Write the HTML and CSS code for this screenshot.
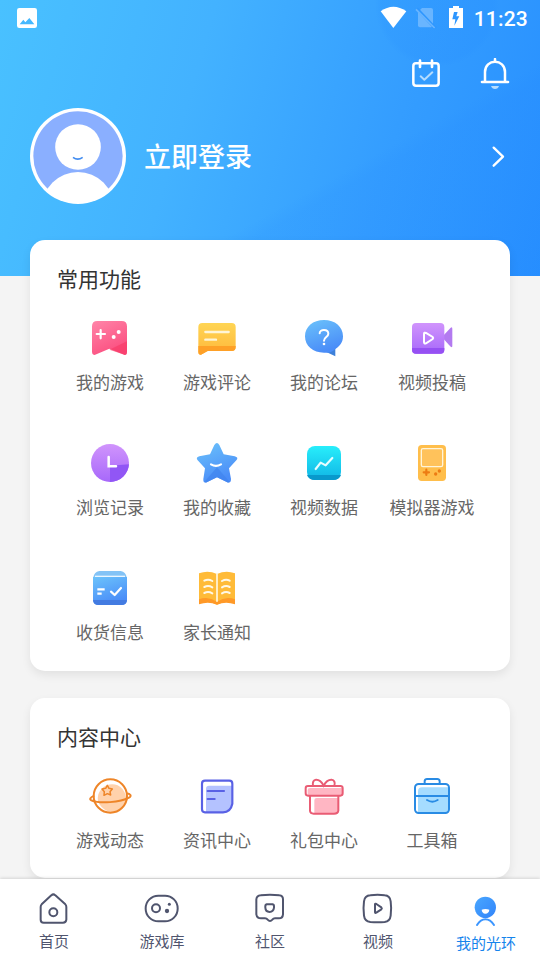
FILE: index.html
```html
<!DOCTYPE html>
<html lang="zh-CN">
<head>
<meta charset="utf-8">
<title>我的光环</title>
<link rel="stylesheet" href="styles.css">
</head>
<body>
<svg class="defs" width="0" height="0" aria-hidden="true">
  <defs>
    <linearGradient id="pink" x1="0" y1="0" x2="0.5" y2="1"><stop offset="0" stop-color="#ff85a9"/><stop offset="1" stop-color="#fb4f80"/></linearGradient>
    <linearGradient id="gold" x1="0" y1="0" x2="0" y2="1"><stop offset="0" stop-color="#ffd554"/><stop offset="1" stop-color="#ffb83b"/></linearGradient>
    <linearGradient id="blue" x1="0" y1="0" x2="0.4" y2="1"><stop offset="0" stop-color="#6cc3fb"/><stop offset="1" stop-color="#4a8df8"/></linearGradient>
    <linearGradient id="violet" x1="0" y1="0" x2="0" y2="1"><stop offset="0" stop-color="#d094fc"/><stop offset="1" stop-color="#a768fa"/></linearGradient>
    <linearGradient id="cyan" x1="0" y1="0" x2="0" y2="1"><stop offset="0" stop-color="#28eefb"/><stop offset="1" stop-color="#10b5e5"/></linearGradient>
    <linearGradient id="me" x1="0" y1="0" x2="1" y2="1"><stop offset="0" stop-color="#49a7ff"/><stop offset="1" stop-color="#3284fa"/></linearGradient>
  </defs>
</svg>
<div class="app">
  <header class="hero">
    <div class="status">
      <svg class="status-picture" viewBox="51 24 60 60"><rect x="51" y="24" width="60" height="60" rx="7" fill="#fff"/><path d="M59 73L70 59L76 67L88 54L103 73Z" fill="#45b8fe"/></svg>
      <svg class="status-icons" viewBox="330 15 255 72">
        <path d="M332 34Q370 7 409 34L370 84Z" fill="#fff"/>
        <path d="M456 24H483Q489 24 489 30V76Q489 82 483 82H450Q444 82 444 76V36Z" fill="#69b5ff"/>
        <path d="M441 26L496 85" stroke="#2d96ff" stroke-width="9"/><path d="M438 28L494 84" stroke="#69b5ff" stroke-width="5"/>
        <path d="M549 18H567V24H579V84H537V24H549Z" fill="#fff"/><path d="M552 36H563L559 49H568L553 77L556 58H547Z" fill="#2d96ff"/>
      </svg>
      <span class="clock">11:23</span>
    </div>
    <div class="actions">
      <svg viewBox="420 174 96 96" fill="none" stroke="#fff" stroke-linecap="round">
        <rect x="430" y="190" width="76" height="67" rx="8" stroke-width="7.5"/><path d="M450 182V201M486 182V201" stroke-width="8"/><path d="M452 229L463 239L487 217" stroke-width="6" stroke="#b4dcff" stroke-linejoin="round"/>
      </svg>
      <svg viewBox="627 174 96 96" fill="none" stroke="#fff" stroke-linecap="round">
        <path d="M645 245V216C645 175 705 175 705 216V245M675 177V184" stroke-width="7.5"/><path d="M636 246H714" stroke-width="8"/><path d="M663 258H687Q684 267 675 267Q666 267 663 258Z" fill="#b4dcff" stroke="none"/>
      </svg>
    </div>
    <div class="profile">
      <svg class="avatar" viewBox="90 324 288 288">
        <clipPath id="face"><circle cx="234" cy="468" r="140"/></clipPath>
        <circle cx="234" cy="468" r="144" fill="#fff"/><circle cx="234" cy="468" r="134" fill="#8aafff"/>
        <g clip-path="url(#face)" fill="#fff"><circle cx="234" cy="441" r="68.5"/><circle cx="234" cy="624" r="108"/></g>
        <path d="M219 472Q233 483 248 472" fill="none" stroke="#438df0" stroke-width="5"/>
      </svg>
      <span class="login">立即登录</span>
      <svg class="chevron" viewBox="663 438 48 66"><path d="M671 443L699 470L671 497" fill="none" stroke="#fff" stroke-width="7" stroke-linecap="round" stroke-linejoin="round"/></svg>
    </div>
  </header>

  <main class="content">
    <section class="card card-common">
      <h2>常用功能</h2>
      <div class="grid">
        <div class="item">
          <svg viewBox="54 18 132 132"><path d="M82 33H155Q171 33 171 49V124Q171 139 159 133L118 116L79 133Q66 139 66 124V49Q66 33 82 33Z" fill="url(#pink)"/><path d="M118 119L171 94V126Q171 139 159 133Z" fill="#f83b67" opacity=".65"/><path d="M92 60V85M80 72H105" stroke="#fff" stroke-width="6.5" stroke-linecap="round"/><circle cx="131" cy="81" r="6" fill="#fff"/><circle cx="146" cy="66" r="6" fill="#fff"/></svg>
          <span>我的游戏</span>
        </div>
        <div class="item">
          <svg viewBox="375 18 132 132"><path d="M397 39H485Q497 39 497 51V111Q497 123 485 123H413L393 134Q385 136 385 126V51Q385 39 397 39Z" fill="url(#gold)"/><path d="M385 108H497V111Q497 123 485 123H413L393 134Q385 136 385 126Z" fill="#fea027"/><path d="M406 66H476M406 89H438" stroke="#fff5d6" stroke-width="7" stroke-linecap="round"/></svg>
          <span>游戏评论</span>
        </div>
        <div class="item">
          <svg viewBox="66 18 132 132"><path d="M166 108V139L139 126Z" fill="#3d80d9"/><path d="M132 30C165 30 189 50 189 79C189 98 178 111 163 119Q153 130 132 128C99 128 75 108 75 79C75 50 99 30 132 30Z" fill="url(#blue)"/><path d="M119 70C119 56 145 57 145 71C145 81 132 81 132 92" fill="none" stroke="#fff" stroke-width="6" stroke-linecap="round"/><circle cx="132" cy="102" r="4" fill="#fff"/></svg>
          <span>我的论坛</span>
        </div>
        <div class="item">
          <svg viewBox="390 18 132 132"><path d="M488 79L512 53Q517 50 517 57V107Q517 114 512 110L488 84Z" fill="#b37af0"/><rect x="396" y="39" width="97" height="92" rx="12" fill="url(#violet)"/><path d="M396 114H493V119Q493 131 481 131H408Q396 131 396 119Z" fill="#9650f3"/><path d="M432 72Q432 66 438 69L458 81Q461 84 458 87L438 100Q432 102 432 96Z" fill="none" stroke="#fff" stroke-width="6"/></svg>
          <span>视频投稿</span>
        </div>
        <div class="item">
          <svg viewBox="54 18 132 132"><circle cx="120" cy="84" r="57" fill="url(#violet)"/><path d="M120 92L177 88C175 117 150 141 120 141Z" fill="#9156f5"/><path d="M116 66V94H138" fill="none" stroke="#fff" stroke-width="7.5" stroke-linecap="round"/></svg>
          <span>浏览记录</span>
        </div>
        <div class="item">
          <svg viewBox="375 18 132 132"><path d="M433 30Q441 18 448 30L461 58L494 64Q507 67 499 76L477 100L483 132Q483 147 470 141L441 127L412 141Q399 147 400 132L405 100L383 76Q376 67 388 64L420 58Z" fill="url(#blue)"/><path d="M441 97L479 141Q475 144 470 141L441 127L412 141Q407 144 403 141Z" fill="#3f82ed" opacity=".65"/><path d="M423 88Q438 97 453 88" fill="none" stroke="#fff" stroke-width="6.5" stroke-linecap="round"/></svg>
          <span>我的收藏</span>
        </div>
        <div class="item">
          <svg viewBox="66 18 132 132"><rect x="81" y="33" width="102" height="102" rx="24" fill="url(#cyan)"/><path d="M81 120H183Q178 135 159 135H105Q86 135 81 120Z" fill="#0899cc"/><path d="M107 102L122 83L137 91L157 69" fill="none" stroke="#e6fdff" stroke-width="6.5" stroke-linecap="round" stroke-linejoin="round"/></svg>
          <span>视频数据</span>
        </div>
        <div class="item">
          <svg viewBox="390 18 132 132"><rect x="414" y="30" width="84" height="108" rx="11" fill="#ffbe4b"/><rect x="424" y="41" width="64" height="54" rx="5" fill="#ffc25b" stroke="#fff4d9" stroke-width="4"/><path d="M439 104V120M431 112H447" stroke="#ed7c13" stroke-width="6.5" stroke-linecap="round"/><circle cx="467" cy="117" r="5" fill="#ed7c13"/><circle cx="478" cy="108" r="5" fill="#ed7c13"/></svg>
          <span>模拟器游戏</span>
        </div>
        <div class="item">
          <svg viewBox="54 18 132 132"><path d="M88 33H152Q168 35 171 55H69Q72 35 88 33Z" fill="#83c3f6"/><path d="M69 51H171V118Q171 135 155 135H85Q69 135 69 118Z" fill="url(#blue)"/><path d="M69 120H171Q170 135 155 135H85Q70 135 69 120Z" fill="#437be1"/><path d="M75 49H165" stroke="#eaf6ff" stroke-width="4"/><path d="M82 88H104M82 101H95" stroke="#fff" stroke-width="6.5"/><path d="M123 95L134 105L153 84" fill="none" stroke="#fff" stroke-width="6.5" stroke-linecap="round" stroke-linejoin="round"/></svg>
          <span>收货信息</span>
        </div>
        <div class="item">
          <svg viewBox="375 18 132 132"><path d="M387 40Q414 30 441 42Q468 30 495 40V129Q467 119 441 134Q415 119 387 129Z" fill="#ffbb38"/><path d="M387 118Q415 108 441 125Q467 108 495 118V133Q467 123 441 134Q415 123 387 133Z" fill="#ff9927"/><path d="M441 42V125" stroke="#fff6df" stroke-width="5"/><path d="M403 62Q415 56 427 63M403 81Q415 75 427 82M403 99Q415 93 427 100M456 63Q468 56 479 62M456 82Q468 75 479 81M456 100Q468 93 479 99" fill="none" stroke="#fff8e6" stroke-width="6" stroke-linecap="round"/></svg>
          <span>家长通知</span>
        </div>
      </div>
    </section>

    <section class="card card-center">
      <h2>内容中心</h2>
      <div class="grid">
        <div class="item">
          <svg viewBox="54 18 132 132" fill="none" stroke="#ee8528" stroke-width="6" stroke-linejoin="round"><path d="M84 101C78 64 112 40 143 52C167 65 176 93 160 116C143 141 104 139 84 101Z" fill="#ffd2ac" stroke="none"/><circle cx="121" cy="84" r="50"/><path d="M73 83C61 88 57 94 64 97C89 108 151 103 177 89C186 84 182 77 169 76"/><path d="M112 52L117 61L127 63L120 71L122 81L112 77L102 82L103 71L96 63L107 61Z" stroke-width="4.5"/></svg>
          <span>游戏动态</span>
        </div>
        <div class="item">
          <svg viewBox="375 18 132 132"><path d="M417 53H486V112Q481 133 463 133H408V62Q408 53 417 53Z" fill="#b4c2ff"/><path d="M405 38H478Q487 38 487 47V107Q482 132 459 133H405Q396 133 396 124V47Q396 38 405 38ZM413 69H462M413 93H434" fill="none" stroke="#5961e5" stroke-width="6.5" stroke-linecap="round"/></svg>
          <span>资讯中心</span>
        </div>
        <div class="item">
          <svg viewBox="66 18 132 132"><path d="M90 60H188V82H83V67Q83 60 90 60ZM110 90H174V128Q174 137 165 137H103V97Q103 90 110 90Z" fill="#ffb6c3"/><g fill="none" stroke="#e95c74" stroke-width="6"><rect x="77" y="54" width="111" height="29" rx="7"/><path d="M90 83V129Q91 137 101 137H162Q174 137 175 128V83M99 54C94 31 117 28 131 53C145 28 170 31 163 54"/></g></svg>
          <span>礼包中心</span>
        </div>
        <div class="item">
          <svg viewBox="390 18 132 132"><path d="M426 58H505V133H414V70Q414 58 426 58Z" fill="#a5dcff"/><g fill="none" stroke="#298be4" stroke-width="6" stroke-linecap="round"><rect x="405" y="48" width="102" height="87" rx="11"/><path d="M434 47V39Q435 33 441 33H472Q478 33 479 39V47M406 84H506M441 96Q457 106 473 96"/></g></svg>
          <span>工具箱</span>
        </div>
      </div>
    </section>
  </main>

  <nav class="tabs">
    <div class="tab">
      <svg viewBox="96 54 132 102"><path d="M154 76Q160 70 166 76L196 103Q199 106 199 111V149Q198 158 189 158H131Q122 158 122 149V111Q122 106 125 103Z"/><circle cx="160" cy="127" r="12"/></svg>
      <span>首页</span>
    </div>
    <div class="tab">
      <svg viewBox="420 54 132 102"><rect x="437" y="77" width="96" height="77" rx="38"/><circle cx="468" cy="115" r="12"/><circle cx="501" cy="123" r="6.5" class="dot"/><circle cx="508" cy="103" r="4.5" class="dot"/></svg>
      <span>游戏库</span>
    </div>
    <div class="tab">
      <svg viewBox="-66 54 132 102"><path d="M-28 76Q0 72 28 76Q39 77 39 88V133Q38 145 27 145H15Q10 145 7 149Q0 157 -7 149Q-10 145 -15 145H-27Q-39 145 -41 133V88Q-40 77 -28 76ZM-10 103H8Q13 104 12 113C10 130 -13 130 -14 113Q-15 104 -10 103Z"/></svg>
      <span>社区</span>
    </div>
    <div class="tab">
      <svg viewBox="258 54 132 102"><path d="M301 76Q323 73 344 76Q360 77 362 94Q365 115 362 137Q360 154 344 156Q323 158 301 156Q284 154 282 137Q279 115 282 94Q284 77 301 76ZM315 103Q315 100 319 102L334 112Q337 115 334 118L319 128Q315 130 315 127Z"/></svg>
      <span>视频</span>
    </div>
    <div class="tab active">
      <svg viewBox="582 60 132 108"><circle cx="646" cy="112" r="32" class="head"/><path d="M635 119Q646 115 658 119Q657 130 646 131Q636 130 635 119Z" class="mouth"/><path d="M621 165Q632 148 646 148Q661 148 672 165"/></svg>
      <span>我的光环</span>
    </div>
  </nav>
</div>
</body>
</html>
```
FILE: styles.css
```css
* { box-sizing: border-box; }

body {
  margin: 0;
  font-family: "Noto Sans CJK SC", sans-serif;
  background: #f4f4f4;
}

svg { display: block; flex: none; }
.defs { position: absolute; }

.app {
  width: 540px;
  height: 960px;
  display: flex;
  flex-direction: column;
  overflow: hidden;
}

.hero {
  height: 276px;
  flex: none;
  background:
    radial-gradient(circle at 437px 5px, rgba(35, 138, 255, .14) 0 56px, transparent 62px),
    linear-gradient(151deg, transparent 63%, rgba(32, 130, 255, .1) 66%),
    linear-gradient(106deg, #49c1ff 0%, #43b2ff 35%, #349dff 70%, #278fff 100%);
}

.status {
  height: 36px;
  padding: 0 12px 0 17px;
  display: flex;
  align-items: center;
}
.status-picture { width: 20px; height: 20px; }
.status-icons { width: 85px; height: 24px; margin-left: auto; margin-bottom: 2px; }
.clock {
  margin-left: 9px;
  margin-top: 2px;
  font: 500 21px/24px Roboto, sans-serif;
  letter-spacing: .2px;
  color: #fff;
}

.actions {
  height: 72px;
  padding: 22px 29px 0 0;
  display: flex;
  justify-content: flex-end;
  gap: 37px;
}
.actions svg { width: 32px; height: 32px; }

.profile {
  height: 96px;
  padding: 0 33px 0 30px;
  display: flex;
  align-items: center;
}
.avatar { width: 96px; height: 96px; }
.login {
  margin-left: 18px;
  font-size: 27px;
  line-height: 40px;
  font-weight: 500;
  color: #fff;
}
.chevron { width: 16px; height: 22px; margin-left: auto; margin-top: 2px; }

.content {
  height: 639px;
  flex: none;
  margin-top: -36px;
  padding: 0 30px;
  display: flex;
  flex-direction: column;
  gap: 27px;
}

.card {
  flex: none;
  padding: 22px 0 0 27px;
  background: #fff;
  border-radius: 15px;
  box-shadow: 0 4px 10px rgba(0, 0, 0, .08);
}
.card-common { height: 431px; }
.card-center { height: 180px; }

h2 {
  margin: 0 0 22px;
  font-size: 21px;
  line-height: 32px;
  font-weight: 400;
  color: #333;
}

.grid {
  display: grid;
  grid-template-columns: 106px 108px 106px 110px;
  grid-auto-rows: 125px;
}
.item {
  display: flex;
  flex-direction: column;
  align-items: center;
  gap: 10px;
}
.item svg { width: 44px; height: 44px; }
.item span {
  font-size: 17px;
  line-height: 24px;
  color: #666;
  white-space: nowrap;
}

.tabs {
  position: relative;
  height: 81px;
  flex: none;
  display: flex;
  background: #fff;
  box-shadow: 0 -1px 3px rgba(0, 0, 0, .13);
}
.tab {
  width: 108px;
  padding-top: 9px;
  display: flex;
  flex-direction: column;
  align-items: center;
  gap: 8px;
  color: #50556e;
}
.tab svg {
  width: 44px;
  height: 34px;
  overflow: visible;
  fill: none;
  stroke: currentColor;
  stroke-width: 6;
  stroke-linecap: round;
  stroke-linejoin: round;
}
.tab span { font-size: 15px; line-height: 22px; }
.tab .dot { fill: currentColor; stroke: none; }
.tab.active { padding-top: 11px; gap: 6px; color: #1684ec; }
.tab.active svg { height: 36px; stroke: #3c96ff; }
.tab .head { fill: url(#me); stroke: none; }
.tab .mouth { fill: #fff; stroke: none; }
```
